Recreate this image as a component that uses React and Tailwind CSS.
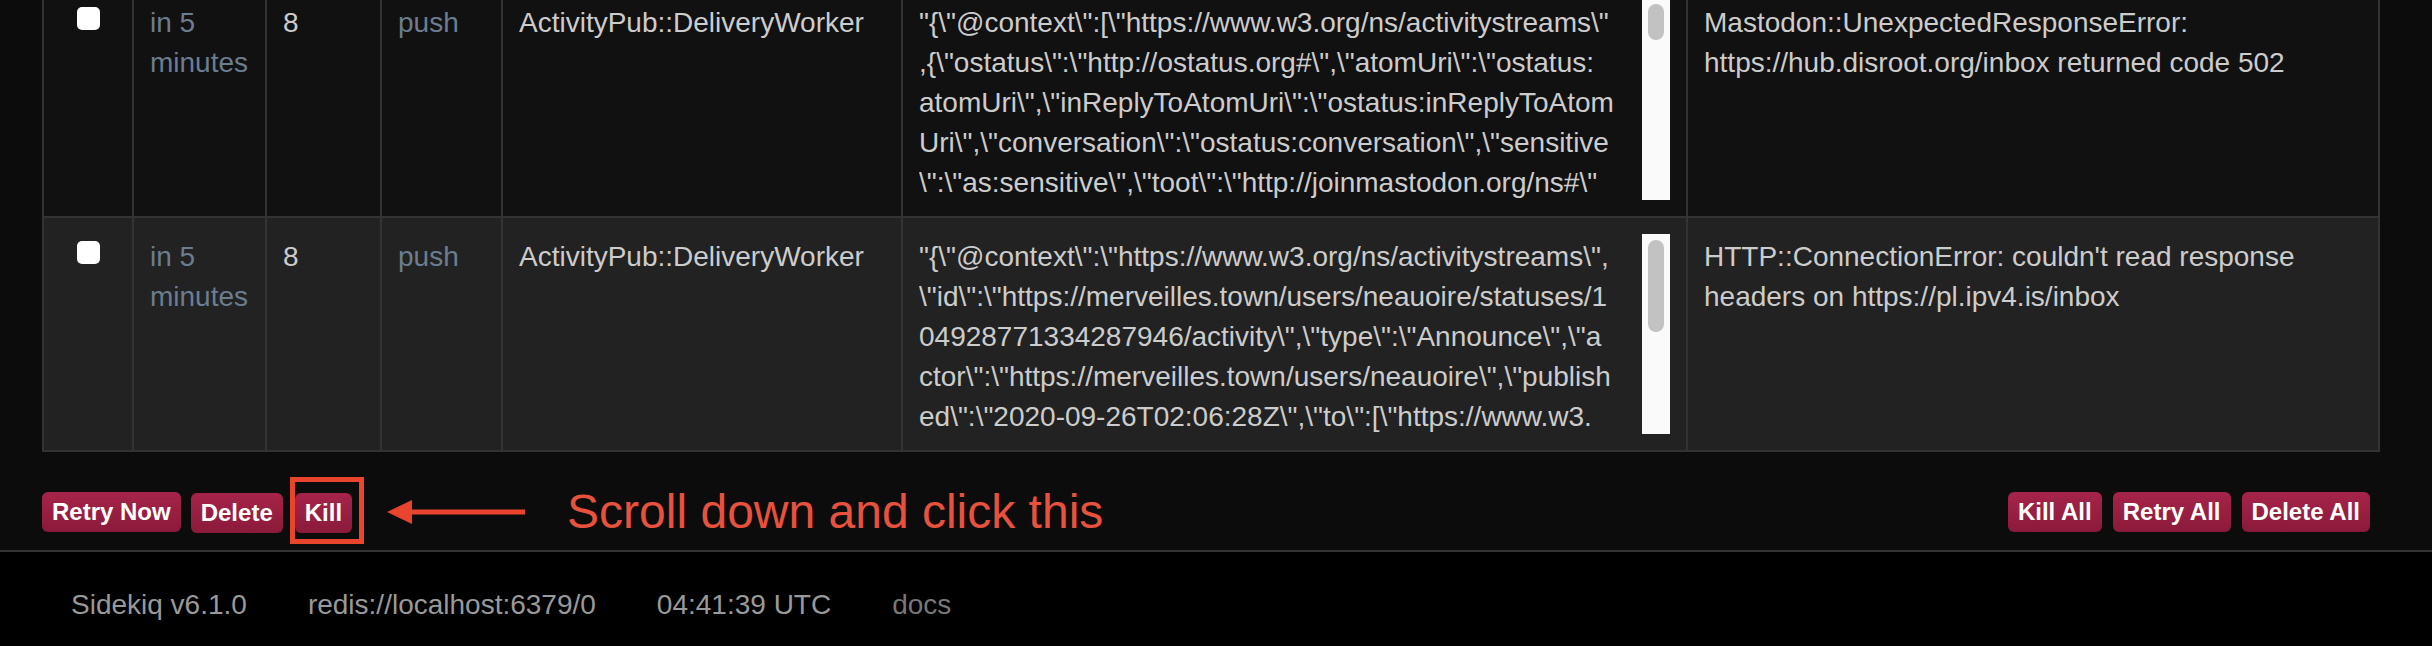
import React from "react";

const rows = [
  {
    bg: "bg-[#111]",
    args: [
      String.raw`"{\"@context\":[\"https://www.w3.org/ns/activitystreams\"`,
      String.raw`,{\"ostatus\":\"http://ostatus.org#\",\"atomUri\":\"ostatus:`,
      String.raw`atomUri\",\"inReplyToAtomUri\":\"ostatus:inReplyToAtom`,
      String.raw`Uri\",\"conversation\":\"ostatus:conversation\",\"sensitive`,
      String.raw`\":\"as:sensitive\",\"toot\":\"http://joinmastodon.org/ns#\"`,
    ],
    thumb: "h-[36px] mt-[4px]",
    error: ["Mastodon::UnexpectedResponseError:", "https://hub.disroot.org/inbox returned code 502"],
  },
  {
    bg: "bg-[#222]",
    args: [
      String.raw`"{\"@context\":\"https://www.w3.org/ns/activitystreams\",`,
      String.raw`\"id\":\"https://merveilles.town/users/neauoire/statuses/1`,
      String.raw`04928771334287946/activity\",\"type\":\"Announce\",\"a`,
      String.raw`ctor\":\"https://merveilles.town/users/neauoire\",\"publish`,
      String.raw`ed\":\"2020-09-26T02:06:28Z\",\"to\":[\"https://www.w3.`,
    ],
    thumb: "h-[92px] mt-[6px]",
    error: ["HTTP::ConnectionError: couldn't read response", "headers on https://pl.ipv4.is/inbox"],
  },
];

// text sits a few px lower in the original font, so the top padding is a bit larger
const cell = "border-2 border-[#333] px-4 pt-[19px] pb-[13px] align-top";

const Btn = ({ children }) => (
  <button className="h-[40px] px-[10px] rounded-[6px] bg-linear-to-b from-[#a6244a] to-[#8b1a3a] text-white font-bold text-[24px] leading-none">
    {children}
  </button>
);

const App = () => {
  return (
    <div className="h-[646px] overflow-hidden flex flex-col bg-[#0c0c0c] text-[28px] leading-[40px] text-[#ccc] font-['Liberation_Sans',Arial,sans-serif]">
      {/* Retry table, scrolled so the first row is cut */}
      <div className="pl-[42px] pr-[52px] mt-[-18px]">
        <table className="w-full table-fixed border-collapse">
          <colgroup>
            <col className="w-[90px]" />
            <col className="w-[133px]" />
            <col className="w-[115px]" />
            <col className="w-[121px]" />
            <col className="w-[400px]" />
            <col className="w-[785px]" />
            <col />
          </colgroup>
          <tbody>
            {rows.map((r, i) => (
              <tr key={i} className={r.bg}>
                <td className={cell}>
                  <div className="w-[23px] h-[23px] mx-auto mt-[4px] rounded-[5px] bg-white" />
                </td>
                <td className={cell + " text-[#6b7d90]"}>in 5 minutes</td>
                <td className={cell}>8</td>
                <td className={cell + " text-[#6b7d90]"}>push</td>
                <td className={cell}>ActivityPub::DeliveryWorker</td>
                <td className={cell}>
                  <div className="flex h-[200px] mt-[-3px] mb-[3px]">
                    <div className="flex-1 overflow-hidden pt-[3px]">
                      {r.args.map((line, j) => (
                        <div key={j} className="whitespace-nowrap">
                          {line}
                        </div>
                      ))}
                    </div>
                    <div className="w-[28px] bg-[#fafafa] flex justify-center">
                      <div className={"w-[16px] rounded-full bg-[#c2c2c2] " + r.thumb} />
                    </div>
                  </div>
                </td>
                <td className={cell}>
                  {r.error.map((t, j) => (
                    <div key={j}>{t}</div>
                  ))}
                </td>
              </tr>
            ))}
          </tbody>
        </table>
      </div>

      {/* Actions */}
      <div className="flex justify-between items-center h-[40px] pl-[42px] pr-[62px] mt-[40px] mb-[18px]">
        <div className="flex items-center">
          <Btn>Retry Now</Btn>
          <div className="ml-[10px]">
            <Btn>Delete</Btn>
          </div>
          <div className="relative ml-[12px]">
            <Btn>Kill</Btn>
            <div className="absolute left-[-5px] right-[-12px] top-[-15px] bottom-[-11px] border-[5px] border-[#e8452c]" />
          </div>
          <svg className="ml-[35px]" width="138" height="26" viewBox="0 0 138 26">
            <polygon points="0,13 25,1 25,25" fill="#e8452c" />
            <rect x="22" y="10.5" width="116" height="5" fill="#e8452c" />
          </svg>
          <span className="ml-[42px] text-[48px] leading-none text-[#e8523d]">Scroll down and click this</span>
        </div>
        <div className="flex items-center gap-[11px]">
          <Btn>Kill All</Btn>
          <Btn>Retry All</Btn>
          <Btn>Delete All</Btn>
        </div>
      </div>

      {/* Footer */}
      <footer className="flex-1 bg-black border-t-2 border-[#333] pt-[33px] pl-[71px] flex gap-[61px] text-[#999]">
        <span>Sidekiq v6.1.0</span>
        <span>redis://localhost:6379/0</span>
        <span>04:41:39 UTC</span>
        <span className="text-[#777]">docs</span>
      </footer>
    </div>
  );
};

export default App;
